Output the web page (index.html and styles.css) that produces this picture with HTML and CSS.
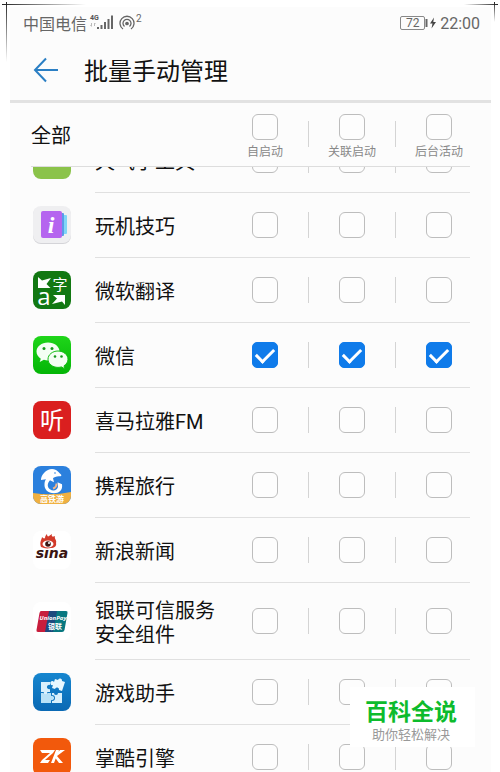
FILE: index.html
```html
<!DOCTYPE html>
<html lang="zh-CN">
<head>
<meta charset="utf-8">
<meta name="viewport" content="width=device-width, initial-scale=1">
<title>批量手动管理</title>
<link rel="stylesheet" href="styles.css">
</head>
<body>
<span class="corner corner-left"></span>
<span class="corner corner-right"></span>
<main class="phone">
  <div class="status">
    <span class="carrier">中国电信</span>
    <svg class="signal" width="26" height="18" viewBox="0 0 26 18">
      <text x="1" y="6" class="net">4G</text>
      <path d="M2.5 9v3M1.500 11l1 1.500M5.500 12V9M6.500 10l-1-1" stroke="#bbb" fill="none"/>
      <path d="M9 13v2M12.500 11v4M16 8v7M19.500 5v10M23 1.500V15" stroke="#666" stroke-width="2"/>
    </svg>
    <svg class="hotspot" width="16" height="16" viewBox="0 0 16 16" fill="none" stroke="#666" stroke-width="1.300">
      <path d="M4 14A7 7 0 1 1 12 14M5.500 11.500A4 4 0 1 1 10.500 11.500"/>
      <circle cx="8" cy="8.500" r="1.200" fill="#666"/>
    </svg>
    <sup class="count">2</sup>
    <span class="battery">72</span>
    <svg width="12" height="14" viewBox="0 0 12 14"><path d="M1.500 3v8" stroke="#666" stroke-width="2"/><path d="M9 1.500L5 7.500h2.500L6.500 12.500l4.500-6.500H8.300z" fill="#444"/></svg>
    <time class="clock">22:00</time>
  </div>
  <header class="titlebar">
    <button class="back" type="button" aria-label="返回">
      <svg width="26" height="26" viewBox="0 0 26 26" fill="none" stroke="#2b7fc4" stroke-width="2"><path d="M13 1.500L2 13l11 11.500M2 13h23"/></svg>
    </button>
    <h1>批量手动管理</h1>
  </header>
  <section class="all">
    <h2>全部</h2>
    <div class="checks">
      <label><input type="checkbox"><span>自启动</span></label><i></i>
      <label><input type="checkbox"><span>关联启动</span></label><i></i>
      <label><input type="checkbox"><span>后台活动</span></label>
    </div>
  </section>
  <ul class="apps">
    <li>
      <svg class="icon" viewBox="0 0 38 38"><rect width="38" height="38" rx="8" fill="#8bc34a"/></svg>
      <div class="row"><span class="name">天气小工具</span>
        <div class="checks"><input type="checkbox" aria-label="自启动"><i></i><input type="checkbox" aria-label="关联启动"><i></i><input type="checkbox" aria-label="后台活动"></div></div>
    </li>
    <li>
      <svg class="icon" viewBox="0 0 38 38">
        <rect y="1" width="38" height="37" rx="8" fill="#d4d4d8"/><rect width="38" height="37" rx="8" fill="#efeff1"/>
        <rect x="24" y="9" width="10" height="19" rx="1" fill="#7fd6f7"/><rect x="22" y="7" width="9" height="23" rx="1" fill="#5a9be8"/>
        <rect x="8" y="5" width="21" height="27" rx="2" fill="#b565ef"/>
        <text x="18" y="27" class="glyph-i">i</text>
      </svg>
      <div class="row"><span class="name">玩机技巧</span>
        <div class="checks"><input type="checkbox" aria-label="自启动"><i></i><input type="checkbox" aria-label="关联启动"><i></i><input type="checkbox" aria-label="后台活动"></div></div>
    </li>
    <li>
      <svg class="icon" viewBox="0 0 38 38">
        <rect width="38" height="38" rx="8" fill="#127812"/>
        <path d="M5 6l4 3.500L18 7l-4.500 6 4 4H5zM32 34l-3-3.500L19 33l5-5.500-4-3.500h12z" fill="#fff"/>
        <text x="27" y="19" class="glyph-zi">字</text><text x="11" y="34" class="glyph-a">a</text>
      </svg>
      <div class="row"><span class="name">微软翻译</span>
        <div class="checks"><input type="checkbox" aria-label="自启动"><i></i><input type="checkbox" aria-label="关联启动"><i></i><input type="checkbox" aria-label="后台活动"></div></div>
    </li>
    <li>
      <svg class="icon" viewBox="0 0 38 38">
        <defs><linearGradient id="wx" x2="0" y2="1"><stop stop-color="#1fd51a"/><stop offset="1" stop-color="#04b507"/></linearGradient></defs>
        <rect width="38" height="38" rx="8" fill="url(#wx)"/>
        <path d="M15 6.500C8.500 6.500 3.500 10.500 3.500 15.500c0 3 1.700 5.500 4.300 7.200L6.700 26l4.200-2.200c1.300.4 2.700.6 4.100.6 6.400 0 11.500-4 11.500-9S21.400 6.500 15 6.500z" fill="#f4fff4"/>
        <path d="M25 15c-5.500 0-10 3.700-10 8.200s4.500 8.200 10 8.200c1.200 0 2.400-.2 3.500-.5l3.300 1.900-.8-3c2.400-1.500 4-3.900 4-6.600C35 18.700 30.500 15 25 15z" fill="#f4fff4" stroke="#12bd12"/>
        <g fill="#169a1b"><circle cx="11" cy="12.500" r="1.500"/><circle cx="19" cy="12.500" r="1.500"/><circle cx="22" cy="20.500" r="1.300"/><circle cx="28.500" cy="20.500" r="1.300"/></g>
      </svg>
      <div class="row"><span class="name">微信</span>
        <div class="checks"><input type="checkbox" aria-label="自启动" checked><i></i><input type="checkbox" aria-label="关联启动" checked><i></i><input type="checkbox" aria-label="后台活动" checked></div></div>
    </li>
    <li>
      <svg class="icon" viewBox="0 0 38 38"><rect width="38" height="38" rx="8" fill="#da1f1f"/><text x="19" y="28" class="glyph-ting">听</text></svg>
      <div class="row"><span class="name">喜马拉雅FM</span>
        <div class="checks"><input type="checkbox" aria-label="自启动"><i></i><input type="checkbox" aria-label="关联启动"><i></i><input type="checkbox" aria-label="后台活动"></div></div>
    </li>
    <li>
      <svg class="icon" viewBox="0 0 38 38">
        <defs><clipPath id="round"><rect width="38" height="38" rx="8"/></clipPath></defs>
        <g clip-path="url(#round)"><rect width="38" height="38" fill="#2b80dd"/><path d="M0 27q19 3 38-1v12H0z" fill="#f0b040"/></g>
        <path d="M8 14c0-4 3-8 7-10 2-1 5-1.500 8 0 2 1 3 3 5 4.500 1 1 0 2-2 1.800-3 0-5 1-6 2l1 4-4-2c-3 3-3 7 0 9 3 2.500 8 1 8-3l-.5-4 4.500 2c1 6-3 9-8 9-6 0-10-4-9.500-9 0-2 .5-4 1.500-5z" fill="#fff"/>
        <path d="M20 22.500q3.500-1 3.500-5" fill="none" stroke="#f0b58a" stroke-width="2"/><circle cx="22" cy="7" r=".8" fill="#2b80dd"/>
        <text x="19" y="36" class="glyph-trip">高铁游</text>
      </svg>
      <div class="row"><span class="name">携程旅行</span>
        <div class="checks"><input type="checkbox" aria-label="自启动"><i></i><input type="checkbox" aria-label="关联启动"><i></i><input type="checkbox" aria-label="后台活动"></div></div>
    </li>
    <li>
      <svg class="icon" viewBox="0 0 38 38">
        <rect width="38" height="38" rx="8" fill="#fff"/>
        <path d="M8 16C6 11 9 8 9 6c1 1 2 2 3 1 0-2 1-3 2-4 0 2 1 3 2 2l3-2c-1 3 1 3 3 2-1 3 2 4 1 7 1 3-2 5-5 5-5 1-7 0-10-1z" fill="#d23a2a"/>
        <ellipse cx="15" cy="13" rx="5.500" ry="3.500" fill="#fff"/><circle cx="15" cy="13" r="2.800" fill="#3a1512"/><circle cx="16" cy="12" r="1" fill="#fff"/>
        <text x="19" y="27" class="glyph-sina">sına</text>
      </svg>
      <div class="row"><span class="name">新浪新闻</span>
        <div class="checks"><input type="checkbox" aria-label="自启动"><i></i><input type="checkbox" aria-label="关联启动"><i></i><input type="checkbox" aria-label="后台活动"></div></div>
    </li>
    <li class="tall">
      <svg class="icon" viewBox="0 0 38 38">
        <rect width="38" height="38" rx="8" fill="#fff"/>
        <path d="M8 9h11l-4 21H5q-2 0-1.500-2L6.500 11q.5-2 1.500-2z" fill="#c81e3c"/><path d="M16 9h9l-4 21h-9z" fill="#1d4a7e"/><path d="M24 9h9q2 0 1.500 2l-3 17q-.5 2-2.500 2h-9z" fill="#087880"/>
        <text x="20" y="18" class="glyph-up">UnionPay</text><text x="22" y="27" class="glyph-yl">银联</text>
      </svg>
      <div class="row"><span class="name">银联可信服务安全组件</span>
        <div class="checks"><input type="checkbox" aria-label="自启动"><i></i><input type="checkbox" aria-label="关联启动"><i></i><input type="checkbox" aria-label="后台活动"></div></div>
    </li>
    <li>
      <svg class="icon" viewBox="0 0 38 38">
        <defs><linearGradient id="game" x2="0" y2="1"><stop stop-color="#1686cf"/><stop offset="1" stop-color="#0a69b4"/></linearGradient></defs>
        <rect width="38" height="38" rx="8" fill="url(#game)"/>
        <path d="M8 9h9v3a2.200 2.200 0 1 0 0 4v3h-3a2 2 0 1 1-3 0H8z" fill="#d8f0fc"/>
        <path d="M8 20h2a3 3 0 0 0 5 0h3v3a2.200 2.200 0 1 1 0 4v3H8z" fill="#b9e2f7"/>
        <path d="M19 20h2a2 2 0 1 0 4 0h4v10H19v-2a3 3 0 0 0 0-6z" fill="#d8f0fc"/>
        <path d="M22 6l3 1a2 2 0 0 1 4 1l3 1-3 9-3-1a2 2 0 0 0-4-1l-3-1 1-3a2 2 0 1 1 1-3z" fill="#e8f8ff"/>
      </svg>
      <div class="row"><span class="name">游戏助手</span>
        <div class="checks"><input type="checkbox" aria-label="自启动"><i></i><input type="checkbox" aria-label="关联启动"><i></i><input type="checkbox" aria-label="后台活动"></div></div>
    </li>
    <li>
      <svg class="icon" viewBox="0 0 38 38">
        <rect width="38" height="38" rx="8" fill="#f2590c"/>
        <path d="M7 12h15l-2 3-8 7h5l-2 3H7l2-3 8-7H9zM23 12h3l-5 13h-3zM27 12h5l-8 6 6 7h-4l-5-7z" fill="#fff"/>
      </svg>
      <div class="row"><span class="name">掌酷引擎</span>
        <div class="checks"><input type="checkbox" aria-label="自启动"><i></i><input type="checkbox" aria-label="关联启动"><i></i><input type="checkbox" aria-label="后台活动"></div></div>
    </li>
  </ul>
</main>
<aside class="brand"><strong>百科全说</strong><span>助你轻松解决</span></aside>
</body>
</html>
```
FILE: styles.css
```css
* { box-sizing: border-box; }

body {
  margin: 0;
  height: 100vh;
  overflow: hidden;
  position: relative;
  background: #fff;
  color: #111;
  font-family: Roboto, "Noto Sans CJK SC", sans-serif;
}

h1, h2 { margin: 0; font-weight: 400; }

.phone {
  height: 100%;
  margin: 0 9px 0 10px;
  padding-top: 7px;
  overflow: hidden;
  background: #fcfcfc content-box;
}

/* Decorative crossed lines in the top corners */
.corner { position: absolute; top: 2px; height: 60px; }
.corner::before, .corner::after { content: ""; position: absolute; }
.corner::before { top: 2px; height: 1px; width: 100%; }
.corner::after { top: 0; width: 1px; height: 100%; }
.corner-left { left: 2px; width: 84px; }
.corner-left::before { background: linear-gradient(to right, #222, transparent); }
.corner-left::after { left: 4px; background: linear-gradient(#222, transparent); }
.corner-right { right: 2px; width: 34px; height: 20px; }
.corner-right::before { background: linear-gradient(to left, #222, transparent); }
.corner-right::after { right: 3px; background: linear-gradient(#222, transparent); }

.status {
  display: flex;
  align-items: center;
  height: 32px;
  padding: 0 11px 0 13px;
  color: #666;
  font-size: 16px;
}
.signal { margin-left: 2px; }
.net { font: bold 7px Roboto, sans-serif; fill: #555; }
.hotspot { margin-left: 4px; }
.count { align-self: flex-start; margin: 6px auto 0 1px; font-size: 10px; line-height: 12px; }
.battery {
  width: 25px;
  border: 1px solid #888;
  border-radius: 2px;
  font-size: 12px;
  line-height: 12px;
  text-align: center;
}
.clock { margin-left: 3px; }

.titlebar {
  display: flex;
  align-items: center;
  gap: 15px;
  height: 64px;
  padding-left: 23px;
  border-bottom: 3px solid #e2e2e2;
}
.titlebar h1 { padding-top: 4px; font-size: 24px; line-height: 36px; }
.back { display: flex; width: 36px; padding: 0; border: 0; background: none; }

.all {
  display: flex;
  justify-content: space-between;
  height: 64px;
  margin: 0 21px;
  border-bottom: 1px solid #ddd;
}
.all h2 { padding-top: 2px; font-size: 20px; line-height: 62px; }
.all .checks { align-items: flex-start; padding-top: 11px; }
.all .checks i { margin-top: 7px; }
.all label {
  display: flex;
  flex-direction: column;
  align-items: center;
  width: 26px;
  color: #888;
  font-size: 12px;
  line-height: 24px;
  white-space: nowrap;
}

.checks { display: flex; align-items: center; gap: 30px; padding-right: 18px; }
.checks i { width: 1px; height: 26px; background: #d4d4d4; }

input {
  flex: none;
  appearance: none;
  width: 26px;
  height: 26px;
  margin: 0;
  border: 1px solid #bdbdbd;
  border-radius: 6px;
  background: #fdfdfd;
}
input:checked {
  display: grid;
  place-items: center;
  border-color: #0f7bea;
  border-radius: 5px;
  background: #0f7bea;
}
input:checked::before {
  content: "";
  width: 15px;
  height: 8px;
  margin-bottom: 4px;
  border: solid #fff;
  border-width: 0 0 3px 3px;
  transform: rotate(-45deg);
}

.apps { margin: 0; padding: 0; overflow: hidden; list-style: none; }
.apps li { display: flex; align-items: center; gap: 24px; height: 65px; padding: 0 21px 0 23px; }
/* The list is scrolled part of a row down */
.apps li:first-child { margin-top: -39px; }
.apps .tall { height: 77px; }
.icon { flex: none; width: 38px; height: 38px; margin-bottom: 1px; }
.row {
  display: flex;
  flex: 1;
  align-items: center;
  justify-content: space-between;
  height: 100%;
  border-bottom: 1px solid #e0e0e0;
}
.name { width: 124px; padding-top: 4px; font-size: 20px; line-height: 24px; }

.icon text { text-anchor: middle; fill: #fff; font-family: "Noto Sans CJK SC", sans-serif; }
.icon .glyph-i { font: italic bold 24px "Liberation Serif", serif; }
.glyph-zi { font-size: 15px; }
.icon .glyph-a { font: 24px "Open Sans", sans-serif; }
.glyph-ting { font-size: 24px; }
.glyph-trip { font-size: 8px; font-weight: 700; }
.icon .glyph-sina { font: italic bold 16px "DejaVu Sans", sans-serif; font-size: 14px; fill: #3a1512; }
.icon .glyph-up { font: italic bold 6px "Open Sans", sans-serif; }
.glyph-yl { font-size: 7px; font-weight: 700; }

.brand {
  position: absolute;
  right: 25px;
  bottom: 25px;
  display: flex;
  flex-direction: column;
  align-items: center;
  width: 125px;
  height: 60px;
  padding: 12px 3px 0 0;
  background: #fff;
}
.brand strong { color: #0dbb2c; font-size: 23px; font-weight: 700; line-height: 28px; }
.brand span { color: #999; font-size: 13px; line-height: 16px; }
```
